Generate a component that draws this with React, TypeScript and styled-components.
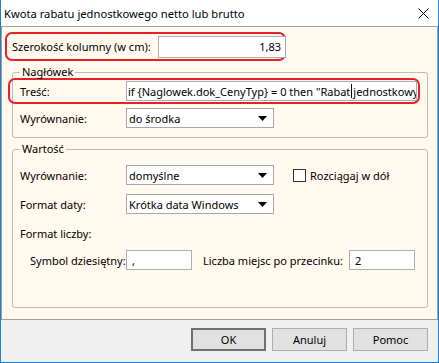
import React from "react";
import styled, { createGlobalStyle } from "styled-components";

const GlobalStyle = createGlobalStyle`
  html, body {
    margin: 0;
    padding: 0;
    background: #ffffff;
  }
  body {
    font-family: "Noto Sans", "Open Sans", sans-serif;
    font-size: 11px;
    color: #000000;
  }
  * {
    box-sizing: border-box;
  }
`;

const Window = styled.div`
  width: 439px;
  height: 363px;
  display: flex;
  flex-direction: column;
  background: #ffffff;
  border: 1px solid #1a80d6;
  border-top: none;
  overflow: hidden;
`;

const TitleBar = styled.div`
  height: 27px;
  flex: none;
  display: flex;
  align-items: center;
  justify-content: space-between;
  padding: 0 9px 0 3px;
  border-bottom: 1px solid #a0a0a0;
  background: #ffffff;
  font-size: 11.2px;
  white-space: nowrap;
`;

const Body = styled.div`
  flex: 1;
  display: flex;
  flex-direction: column;
  align-items: flex-start;
  background: #fff9ee;
  border: 1px solid #a0a0a0;
  border-top: none;
  padding: 5px 9px 11px 3px;
`;

const Highlight = styled.div<{ $w: number; $h: number; $pl: number }>`
  flex: none;
  width: ${(p) => p.$w}px;
  height: ${(p) => p.$h}px;
  display: flex;
  align-items: center;
  padding-left: ${(p) => p.$pl}px;
  border: 2px solid #e5222a;
  border-radius: 7px;
`;

const Group = styled.fieldset<{ $grow?: boolean }>`
  align-self: stretch;
  flex: ${(p) => (p.$grow ? 1 : "none")};
  margin: 3px 0 0 7px;
  padding: 0 0 9px 0;
  min-width: 0;
  border: 1px solid #bcbcbc;
  border-radius: 3px;
`;

const Legend = styled.legend`
  margin-left: 7px;
  padding: 0 2px;
  line-height: 16px;
`;

const Row = styled.div<{ $mt: number; $ml: number; $h?: number }>`
  display: flex;
  align-items: center;
  height: ${(p) => p.$h ?? 20}px;
  margin-top: ${(p) => p.$mt}px;
  margin-left: ${(p) => p.$ml}px;
`;

const Label = styled.span<{ $w?: number }>`
  flex: none;
  width: ${(p) => (p.$w ? `${p.$w}px` : "auto")};
  white-space: nowrap;
`;

const TextBox = styled.div<{ $w: number; $h?: number; $right?: boolean; $pad?: number }>`
  flex: none;
  width: ${(p) => p.$w}px;
  height: ${(p) => p.$h ?? 20}px;
  display: flex;
  align-items: center;
  justify-content: ${(p) => (p.$right ? "flex-end" : "flex-start")};
  padding: 0 ${(p) => p.$pad ?? 4}px;
  background: #ffffff;
  border: 1px solid #abadb3;
  white-space: nowrap;
  overflow: hidden;
`;

const Caret = styled.span`
  flex: none;
  width: 1px;
  height: 14px;
  margin: 0 1px;
  background: #000000;
`;

const ComboBox = styled.div<{ $w: number }>`
  flex: none;
  width: ${(p) => p.$w}px;
  height: 20px;
  display: flex;
  align-items: center;
  justify-content: space-between;
  padding: 0 6px 0 2px;
  background: #ffffff;
  border: 1px solid #a7a7a7;
  white-space: nowrap;
`;

const CheckBox = styled.span`
  flex: none;
  width: 13px;
  height: 13px;
  margin: 0 4px 0 19px;
  background: #ffffff;
  border: 1px solid #333333;
`;

const Footer = styled.div`
  height: 42px;
  flex: none;
  display: flex;
  justify-content: flex-end;
  align-items: flex-start;
  gap: 6px;
  padding: 8px 10px 0 0;
  background: #f0f0f0;
`;

const Button = styled.button<{ $default?: boolean }>`
  width: 75px;
  height: 23px;
  padding: 0;
  font: inherit;
  color: #000000;
  background: #e1e1e1;
  border: ${(p) => (p.$default ? "2px solid #707070" : "1px solid #adadad")};
`;

const Arrow = () => (
  <svg width="9" height="5" viewBox="0 0 9 5">
    <polygon points="0,0 9,0 4.5,5" fill="#000" />
  </svg>
);

const CloseIcon = () => (
  <svg width="11" height="11" viewBox="0 0 11 11">
    <path d="M0.5 0.5 L10.5 10.5 M10.5 0.5 L0.5 10.5" stroke="#000" strokeWidth="1" />
  </svg>
);

export default function App() {
  return (
    <>
      <GlobalStyle />
      <Window>
        <TitleBar>
          <span>Kwota rabatu jednostkowego netto lub brutto</span>
          <CloseIcon />
        </TitleBar>
        <Body>
          <Highlight $w={281} $h={29} $pl={5}>
            <Label $w={146}>Szerokość kolumny (w cm):</Label>
            <TextBox $w={128} $h={22} $right>
              1,83
            </TextBox>
          </Highlight>

          <Group>
            <Legend>Nagłówek</Legend>
            <Highlight $w={412} $h={26} $pl={10} style={{ marginTop: -2, marginLeft: -5 }}>
              <Label $w={106}>Treść:</Label>
              <TextBox $w={291} $pad={1}>
                <span>if {"{"}Naglowek.dok_CenyTyp{"}"} = 0 then "Rabat</span>
                <Caret />
                <span>jednostkowy</span>
              </TextBox>
            </Highlight>
            <Row $mt={4} $ml={7}>
              <Label $w={106}>Wyrównanie:</Label>
              <ComboBox $w={148}>
                do środka
                <Arrow />
              </ComboBox>
            </Row>
          </Group>

          <Group $grow>
            <Legend>Wartość</Legend>
            <Row $mt={8} $ml={7}>
              <Label $w={106}>Wyrównanie:</Label>
              <ComboBox $w={148}>
                domyślne
                <Arrow />
              </ComboBox>
              <CheckBox />
              <Label>Rozciągaj w dół</Label>
            </Row>
            <Row $mt={9} $ml={7}>
              <Label $w={106}>Format daty:</Label>
              <ComboBox $w={148}>
                Krótka data Windows
                <Arrow />
              </ComboBox>
            </Row>
            <Row $mt={11} $ml={7} $h={16}>
              <Label>Format liczby:</Label>
            </Row>
            <Row $mt={9} $ml={17}>
              <Label $w={96}>Symbol dziesiętny:</Label>
              <TextBox $w={66} $pad={5}>
                ,
              </TextBox>
              <Label $w={146} style={{ marginLeft: 11 }}>
                Liczba miejsc po przecinku:
              </Label>
              <TextBox $w={66} $pad={5}>
                2
              </TextBox>
            </Row>
          </Group>
        </Body>
        <Footer>
          <Button $default>OK</Button>
          <Button>Anuluj</Button>
          <Button>Pomoc</Button>
        </Footer>
      </Window>
    </>
  );
}
